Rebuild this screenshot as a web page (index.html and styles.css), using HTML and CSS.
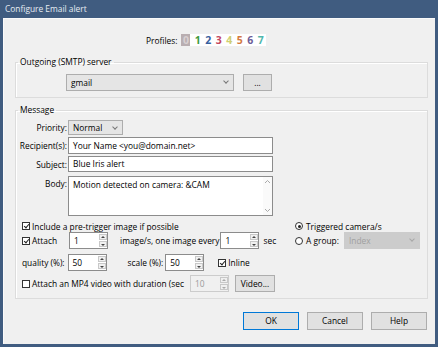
FILE: index.html
```html
<!DOCTYPE html>
<html lang="en">
<head>
    <meta charset="UTF-8">
    <title>Configure Email alert</title>
    <link rel="stylesheet" href="styles.css">
</head>
<body>

    <div class="window">
        <div class="titlebar">Configure Email alert</div>

        <div class="client">
            <div class="profiles">
                <span class="profiles-label">Profiles:</span>
                <span class="profile-strip">
                    <span class="pf p0">0</span>
                    <span class="pf p1">1</span>
                    <span class="pf p2">2</span>
                    <span class="pf p3">3</span>
                    <span class="pf p4">4</span>
                    <span class="pf p5">5</span>
                    <span class="pf p6">6</span>
                    <span class="pf p7">7</span>
                </span>
            </div>

            <fieldset class="group smtp">
                <legend>Outgoing (SMTP) server</legend>
                <div class="row smtp-row">
                    <div class="combo server-combo">gmail<span class="chev"></span></div>
                    <div class="btn dots-btn">...</div>
                </div>
            </fieldset>

            <fieldset class="group message">
                <legend>Message</legend>

                <div class="row field-row priority-row">
                    <span class="flabel">Priority:</span>
                    <div class="combo priority-combo">Normal<span class="chev"></span></div>
                </div>
                <div class="row field-row recip-row">
                    <span class="flabel">Recipient(s):</span>
                    <div class="textbox">Your Name &lt;you@domain.net&gt;</div>
                </div>
                <div class="row field-row subject-row">
                    <span class="flabel">Subject:</span>
                    <div class="textbox">Blue Iris alert</div>
                </div>
                <div class="row field-row body-row">
                    <span class="flabel">Body:</span>
                    <div class="textbox textarea">
                        <span class="area-text">Motion detected on camera: &amp;CAM</span>
                        <span class="vscroll">
                            <svg width="7" height="5" viewBox="0 0 7 5"><path d="M1 4 L3.5 1.5 L6 4" fill="none" stroke="#aaa" stroke-width="1"/></svg>
                            <svg width="7" height="5" viewBox="0 0 7 5"><path d="M1 1 L3.5 3.5 L6 1" fill="none" stroke="#aaa" stroke-width="1"/></svg>
                        </span>
                    </div>
                </div>

                <div class="row opt-row include-row">
                    <div class="left">
                        <span class="check on"></span><span class="ctext">Include a pre-trigger image if possible</span>
                    </div>
                    <div class="right">
                        <span class="radio on"></span><span class="ctext">Triggered camera/s</span>
                    </div>
                </div>

                <div class="row opt-row attach-row">
                    <div class="left">
                        <span class="check on"></span><span class="ctext">Attach</span>
                        <div class="spin spin-attach"><span class="val">1</span><span class="arrows"><i class="up"></i><i class="down"></i></span></div>
                        <span class="plain every">image/s, one image every</span>
                        <div class="spin spin-every"><span class="val">1</span><span class="arrows"><i class="up"></i><i class="down"></i></span></div>
                        <span class="plain sec">sec</span>
                    </div>
                    <div class="right">
                        <span class="radio"></span><span class="ctext">A group:</span>
                        <div class="combo group-combo disabled">Index<span class="chev"></span></div>
                    </div>
                </div>

                <div class="row opt-row quality-row">
                    <span class="plain quality">quality (%):</span>
                    <div class="spin spin-quality"><span class="val">50</span><span class="arrows"><i class="up"></i><i class="down"></i></span></div>
                    <span class="plain scale">scale (%):</span>
                    <div class="spin spin-scale"><span class="val">50</span><span class="arrows"><i class="up"></i><i class="down"></i></span></div>
                    <span class="check on inline-check"></span><span class="ctext">Inline</span>
                </div>

                <div class="row opt-row mp4-row">
                    <span class="check"></span><span class="ctext">Attach an MP4 video with duration (sec</span>
                    <div class="spin spin-mp4 disabled"><span class="val">10</span><span class="arrows"><i class="up"></i><i class="down"></i></span></div>
                    <div class="btn video-btn">Video...</div>
                </div>
            </fieldset>

            <div class="buttons">
                <div class="btn dlg-btn default">OK</div>
                <div class="btn dlg-btn">Cancel</div>
                <div class="btn dlg-btn">Help</div>
            </div>
        </div>
    </div>

</body>
</html>
```

FILE: styles.css
```css
body {
    margin: 0;
    background-color: #fff;
    font-family: "Open Sans", "Noto Sans", sans-serif;
    font-size: 8.4px;
    color: #000;
    white-space: nowrap;
}
.window {
    width: 438px;
    height: 347px;
    box-sizing: border-box;
    background-color: #405c80;
    padding: 0 3px 3px 3px;
    display: flex;
    flex-direction: column;
}
.titlebar {
    height: 18px;
    line-height: 18px;
    padding-left: 2px;
    color: #e6ecf3;
    font-size: 8.4px;
}
.client {
    flex: 1;
    background-color: #f0f0f0;
    border-left: 1px solid #fafafa;
    border-top: 1px solid #fafafa;
    display: flex;
    flex-direction: column;
}
.row {
    display: flex;
    align-items: center;
}

/* Profiles */
.profiles {
    display: flex;
    align-items: center;
    margin: 15px 0 0 142px;
    height: 12px;
}
.profiles-label {
    margin-right: 4px;
}
.profile-strip {
    display: flex;
    background-color: #fff;
    font-weight: bold;
    font-size: 10.5px;
    line-height: 12px;
}
.pf {
    width: 10.5px;
    text-align: center;
}
.p0 { background-color: #b9aeb1; color: #d8d0d2; width: 9px; margin-right: 2px; }
.p1 { color: #3d9a3d; }
.p2 { color: #36609e; }
.p3 { color: #c2475f; }
.p4 { color: #cfcf72; }
.p5 { color: #d4793f; }
.p6 { color: #6c5c98; }
.p7 { color: #4fb7ac; }

/* Group boxes */
.group {
    margin: 0 7px 0 11px;
    border: 1px solid #dcdcdc;
    box-shadow: inset 1px 1px 0 #fff;
    padding: 0 0 6px 2px;
}
.group legend {
    padding: 0 2px;
    line-height: 12px;
}
.smtp {
    margin-top: 10px;
}
.smtp-row {
    margin-top: 6px;
    margin-left: 48px;
}
.message {
    margin-top: 6px;
}

/* Controls */
.combo {
    position: relative;
    box-sizing: border-box;
    height: 17px;
    line-height: 15px;
    padding-left: 4px;
    background-color: #e5e5e5;
    border: 1px solid #adadad;
}
.chev {
    position: absolute;
    right: 5px;
    top: 4px;
    width: 3px;
    height: 3px;
    border-right: 1px solid #777;
    border-bottom: 1px solid #777;
    transform: rotate(45deg);
}
.server-combo {
    width: 168px;
}
.btn {
    box-sizing: border-box;
    height: 17px;
    line-height: 15px;
    text-align: center;
    background-color: #e1e1e1;
    border: 1px solid #adadad;
}
.dots-btn {
    width: 29px;
    margin-left: 9px;
}
.field-row {
    margin-top: 2px;
}
.flabel {
    width: 49px;
    padding-right: 1px;
    text-align: right;
}
.priority-row {
    margin-top: 4px;
}
.priority-combo {
    width: 55px;
    height: 15px;
    line-height: 13px;
}
.textbox {
    box-sizing: border-box;
    width: 205px;
    height: 17px;
    line-height: 15px;
    padding-left: 4px;
    background-color: #fff;
    border: 1px solid #8c8c8c;
}
.subject-row .textbox {
    height: 16px;
    line-height: 14px;
}
.body-row {
    margin-top: 4px;
    align-items: flex-start;
}
.body-row .flabel {
    line-height: 15px;
}
.textarea {
    height: 40px;
    display: flex;
    justify-content: space-between;
    padding-right: 0;
}
.vscroll {
    width: 9px;
    display: flex;
    flex-direction: column;
    justify-content: space-between;
    align-items: center;
    padding: 2px 0;
    background-color: #fafafa;
}

/* Checks and radios */
.check, .radio {
    box-sizing: border-box;
    width: 8px;
    height: 8px;
    border: 1px solid #333;
    background-color: #fff;
    position: relative;
    flex: none;
}
.check.on::after {
    content: "";
    position: absolute;
    left: 2px;
    top: 0;
    width: 2px;
    height: 4px;
    border-right: 1px solid #222;
    border-bottom: 1px solid #222;
    transform: rotate(40deg);
}
.radio {
    border-radius: 50%;
}
.radio.on::after {
    content: "";
    position: absolute;
    left: 1.5px;
    top: 1.5px;
    width: 3px;
    height: 3px;
    border-radius: 50%;
    background-color: #222;
}
.ctext {
    margin-left: 2px;
}
.opt-row {
    margin-left: 4px;
}
.opt-row .left {
    display: flex;
    align-items: center;
    width: 273px;
    flex: none;
}
.opt-row .right {
    display: flex;
    align-items: center;
}
.include-row {
    margin-top: 4px;
    height: 12px;
}
.attach-row {
    margin-top: 0;
}

/* Spin boxes */
.spin {
    box-sizing: border-box;
    width: 39px;
    height: 17px;
    line-height: 15px;
    border: 1px solid #8c8c8c;
    background-color: #fff;
    display: flex;
    justify-content: space-between;
}
.spin .val {
    padding-left: 4px;
}
.arrows {
    width: 8px;
    display: flex;
    flex-direction: column;
    padding: 1px 0;
    gap: 1px;
}
.arrows i {
    flex: 1;
    background-color: #f0f0f0;
    border: 1px solid #c8c8c8;
    position: relative;
}
.arrows i::after {
    content: "";
    position: absolute;
    left: 1px;
    border-left: 2px solid transparent;
    border-right: 2px solid transparent;
}
.arrows .up::after {
    top: 1px;
    border-bottom: 2px solid #444;
}
.arrows .down::after {
    top: 2px;
    border-top: 2px solid #444;
}
.spin.disabled {
    background-color: #f0f0f0;
    border-color: #cccccc;
    color: #9a9a9a;
}
.spin.disabled .arrows i::after {
    border-top-color: #aaa;
    border-bottom-color: #aaa;
}
.spin-attach {
    margin-left: 12px;
}
.every {
    margin-left: 12px;
}
.spin-every {
    margin-left: 1px;
}
.sec {
    margin-left: 4px;
}
.right .ctext {
    margin-left: 3px;
}
.group-combo {
    width: 76px;
    margin-left: 5px;
}
.combo.disabled {
    background-color: #cccccc;
    border-color: #cccccc;
    color: #a0a0a0;
}
.combo.disabled .chev {
    border-color: #a8a8a8;
}
.quality-row {
    margin-top: 5px;
}
.spin-quality {
    margin-left: 3px;
}
.scale {
    margin-left: 21px;
}
.spin-scale {
    margin-left: 2px;
}
.inline-check {
    margin-left: 14px;
}
.mp4-row {
    margin-top: 4px;
}
.spin-mp4 {
    margin-left: 6px;
}
.video-btn {
    width: 40px;
    margin-left: 6px;
}

/* Dialog buttons */
.buttons {
    display: flex;
    justify-content: flex-end;
    gap: 8px;
    margin: 13px 8px 0 0;
}
.dlg-btn {
    width: 56px;
    height: 18px;
    line-height: 16px;
}
.dlg-btn.default {
    border-color: #0078d7;
}
```
